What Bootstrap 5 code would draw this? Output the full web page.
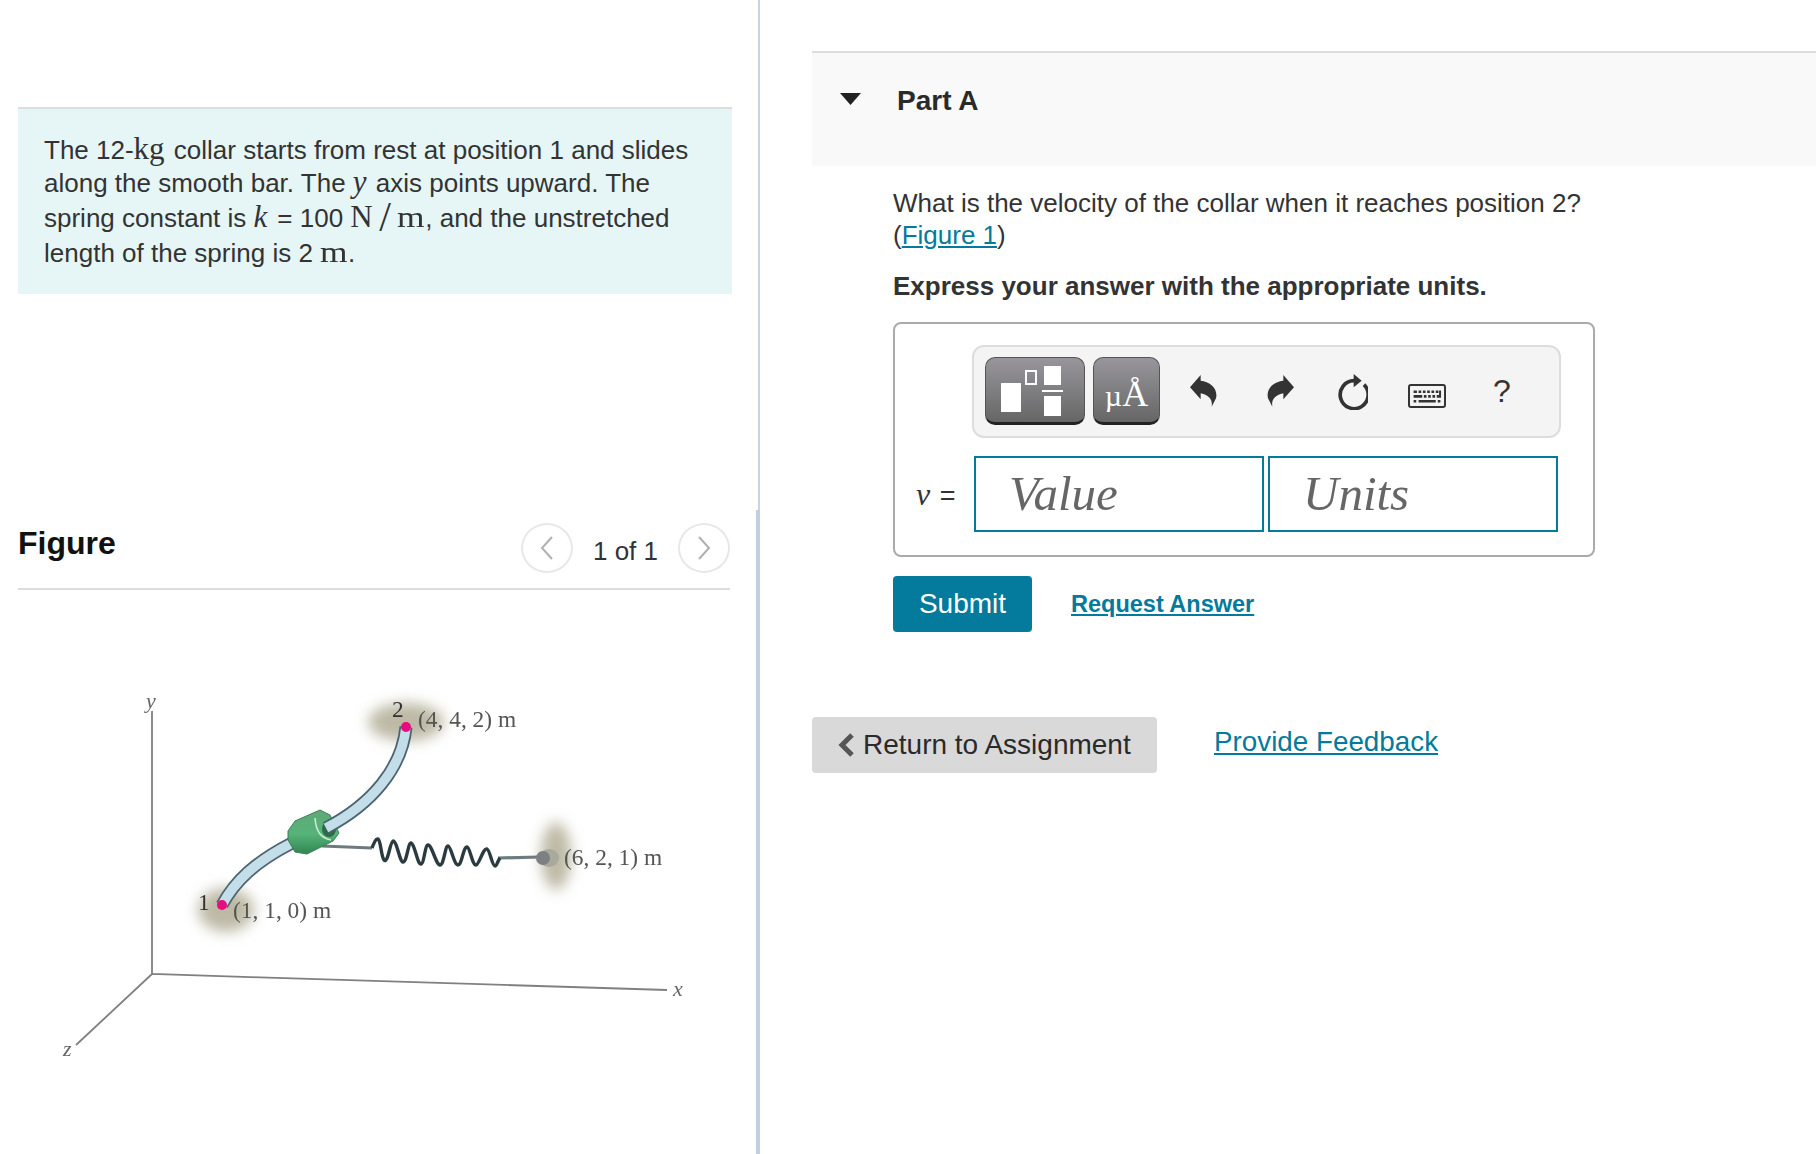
<!DOCTYPE html>
<html lang="en">
<head>
<meta charset="utf-8">
<title>Part A</title>
<link rel="stylesheet" href="https://cdn.jsdelivr.net/npm/bootstrap@5.3.0/dist/css/bootstrap.min.css">
<style>
body{font-family:"Liberation Sans",Arial,sans-serif;font-size:26px;color:#333;background:#fff}
a{color:#047a9c}
.shell{min-height:1154px}
.mth{font-family:"Liberation Serif",serif;font-size:31px;line-height:1}
.mth-kg{padding-right:2px}
.mth-m{display:inline-block;font-size:30px;transform:scaleX(1.18);transform-origin:left center;margin-right:4.500px}
.mth-i{font-family:"Liberation Serif",serif;font-style:italic;font-size:31px;line-height:1;padding-right:2px}
.eq-gap{padding-left:8px}
.big-slash{font-family:"Liberation Serif",serif;font-weight:300;font-size:42px;line-height:26px;vertical-align:-4px;margin:0 6.500px}
.left-pane{width:756px;padding:107px 0 0 18px}
.statement{width:714px;height:187px;background:#e6f6f6;border-top:2px solid #ddd;padding:24px 26px 0;line-height:32px}
.line-tall{display:inline-block;height:38px;width:0;vertical-align:-10px}
.figure-head{width:712px;height:89px;margin-top:207px;border-bottom:2px solid #ddd;padding-bottom:15px}
.figure-title{font-size:32px;font-weight:700;color:#111;line-height:38px;margin:0;padding-bottom:11px}
.nav-circle{width:52px;height:50px;border:2px solid #e8e8e8;border-radius:50%;background:#fff;padding:0}
.page-count{width:105px;text-align:center;font-size:26px;padding-top:6px}
.figure-art{display:block;width:756px;height:562px}
.divider-col{width:4px}
.div-thin{height:510px;width:2px;background:#c7d4e3}
.div-thick{width:4px;background:#c0cfe0}
.right-pane{padding-top:51px;padding-left:52px}
.part-head{height:115px;background:#f9f9f9;border-top:2px solid #ddd;padding:0 0 0 28px}
.part-title{font-size:28px;font-weight:700;color:#2a2a2a;margin:29px 0 0 36px;line-height:38px}
.tri{margin-top:40px;display:block}
.part-body{width:702px;margin-left:81px;padding-top:21px;line-height:32px}
.instr{font-weight:700;margin-top:18.500px}
.answer-box{height:235px;border:2px solid #aaa;border-radius:8px;margin-top:20.500px;padding:21px 0 0 77px}
.tool-bar{width:589px;height:93px;background:#f4f4f4;border:2px solid #ddd;border-radius:12px;padding:10px 0 0 11px}
.tool-btn{height:68px;padding:0;border:1px solid #555;border-bottom:3px solid #222;border-radius:10px;background:linear-gradient(#98969c,#666);color:#fff}
.tool-a{width:100px}
.tool-b{width:67px;margin-left:8px;font-family:"Liberation Serif",serif;font-size:36px;line-height:1;padding-top:7px}
.tool-b:hover,.tool-a:hover{color:#fff;background:#777}
.mu-small{font-size:30px}
.plain-ic{display:block}
.undo-ic{margin:18px 0 0 30px}
.redo-ic{margin:18px 0 0 50px}
.reload-ic{margin:16px 0 0 42px}
.keys-ic{margin:27px 0 0 40px}
.qm{font-size:32px;line-height:32px;margin:18px 0 0 47px;color:#333}
.ans-row{margin:18px 0 0 -77px}
.v-label{width:79px;padding-left:21px;font-size:27px;padding-top:22px;line-height:32px}
.v-label i{font-family:"Liberation Serif",serif;font-size:32px;padding-right:2px}
.ans-input{width:290px;height:76px;border:2px solid #047a9c;border-radius:0;padding:0 0 2px 33px;font-family:"Liberation Serif",serif;font-style:italic;font-size:49px;color:#666;background:#fff}
.ans-input::placeholder{color:#666;opacity:1}
.ans-input+.ans-input{margin-left:4px}
.submit-row{margin-top:19px}
.submit-btn{width:139px;height:56px;padding:0;background:#047a9c;border:0;border-radius:4px;color:#fff;font-size:28px}
.submit-btn:hover{background:#047a9c;color:#fff}
.req-link{font-size:23.500px;font-weight:700;margin:0 0 0 39px}
.foot-row{margin-top:84.500px}
.return-btn{width:345px;height:56px;background:#d9d9d9;border:0;border-radius:4px;padding:0 0 0 26px;font-size:28px;color:#2a2a2a;line-height:1}
.return-btn:hover{background:#d9d9d9;color:#2a2a2a}
.fb-link{font-size:27.800px;margin:0 0 0 57px;padding-bottom:6px}
</style>
</head>
<body>
<div class="shell d-flex">
  <section class="left-pane flex-shrink-0">
    <div class="statement">The 12-<span class="mth mth-kg">kg</span> collar starts from rest at position 1 and slides along the smooth bar. The <span class="mth-i">y</span> axis points upward. The<br>spring constant is <span class="mth-i">k</span><span class="eq-gap">=</span> 100 <span class="mth">N</span><span class="big-slash">/</span><span class="mth mth-m">m</span>, and the unstretched<span class="line-tall"></span><br>length of the spring is 2 <span class="mth mth-m">m</span>.</div>
    <div class="figure-head d-flex align-items-end justify-content-between">
      <h2 class="figure-title">Figure</h2>
      <div class="d-flex align-items-center">
        <button class="nav-circle d-flex align-items-center justify-content-center" aria-label="Previous"><svg width="14" height="24" viewBox="0 0 14 24"><path d="M12 1 2 12l10 11" fill="none" stroke="#b0b0b0" stroke-width="2"/></svg></button>
        <span class="page-count">1 of 1</span>
        <button class="nav-circle d-flex align-items-center justify-content-center" aria-label="Next"><svg width="14" height="24" viewBox="0 0 14 24"><path d="M2 1l10 11L2 23" fill="none" stroke="#b0b0b0" stroke-width="2"/></svg></button>
      </div>
    </div>
    <svg class="figure-art" viewBox="18 592 756 562" aria-label="Collar on a curved bar with a spring">
      <defs>
        <filter id="soft" x="-60%" y="-60%" width="220%" height="220%"><feGaussianBlur stdDeviation="7"/></filter>
        <filter id="tiny" x="-10%" y="-10%" width="120%" height="120%"><feGaussianBlur stdDeviation="0.6"/></filter>
        <linearGradient id="coll" x1="0" y1="0" x2="0" y2="1"><stop offset="0" stop-color="#5fa877"/><stop offset=".55" stop-color="#57b37a"/><stop offset="1" stop-color="#2f8550"/></linearGradient>
      </defs>
      <ellipse cx="226" cy="912" rx="28" ry="22" fill="#bdb9a5" filter="url(#soft)"/>
      <ellipse cx="406" cy="724" rx="38" ry="19" fill="#bdb9a5" filter="url(#soft)"/>
      <ellipse cx="556" cy="858" rx="15" ry="34" fill="#bdb9a5" filter="url(#soft)"/>
      <path d="M152 713V976L667 992M152 976 76 1047" fill="none" stroke="#808080" stroke-width="1.800" filter="url(#tiny)"/>
      <g filter="url(#tiny)">
        <path d="M222 907C235 883 255 864 292 845" fill="none" stroke="#4c6470" stroke-width="13"/>
        <path d="M222 907C235 883 255 864 292 845" fill="none" stroke="#c3dde9" stroke-width="9.500"/>
        <path d="M322 848 372 850M498 860 540 859" stroke="#6d7a7e" stroke-width="3.200" fill="none"/>
        <path d="M372 850C374 845 376 840 378 841 381 843 381 858 384 862 388 866 390 844 393 843 397 843 400 865 403 864 407 864 408 845 411 845 415 846 417 866 421 866 424 866 425 847 428 847 432 847 436 867 440 867 444 867 445 848 448 848 451 848 454 867 458 867 462 867 463 849 467 849 470 849 472 867 476 867 479 867 483 850 487 851 490 852 492 868 495 868 497 868 498 862 500 860" fill="none" stroke="#2c3a40" stroke-width="3.400" stroke-linejoin="round"/>
        <ellipse cx="549" cy="860" rx="10" ry="9" fill="#a9a99d"/>
        <circle cx="543" cy="860" r="7" fill="#7c8082"/>
        <path d="M288 833 295 823 320 812 330 817 339 835 333 843 307 856 295 854 288 842Z" fill="url(#coll)" stroke="#3c7d55" stroke-width="1"/>
        <path d="M315 820C316 835 322 840 331 842" fill="none" stroke="#c8ead2" stroke-width="1.600"/>
        <ellipse cx="329" cy="831" rx="7" ry="8" fill="#2f6b47"/>
        <path d="M326 830C372 806 402 770 406 729" fill="none" stroke="#4c6470" stroke-width="13"/>
        <path d="M326 830C372 806 402 770 406 729" fill="none" stroke="#c3dde9" stroke-width="9.500"/>
        <circle cx="222" cy="907" r="5" fill="#e5087f"/>
        <circle cx="406" cy="729" r="5" fill="#e5087f"/>
      </g>
      <g font-family="Liberation Serif,serif" fill="#555" filter="url(#tiny)" font-size="23.400">
        <text x="418" y="729">(4, 4, 2) m</text>
        <text x="233" y="920">(1, 1, 0) m</text>
        <text x="564" y="867">(6, 2, 1) m</text>
        <text x="392" y="719" fill="#333">2</text>
        <text x="198" y="912" fill="#333">1</text>
        <text x="146" y="710" font-style="italic" font-size="22" fill="#666">y</text>
        <text x="673" y="998" font-style="italic" font-size="22" fill="#666">x</text>
        <text x="63" y="1058" font-style="italic" font-size="22" fill="#666">z</text>
      </g>
    </svg>
  </section>
  <div class="divider-col d-flex flex-column align-items-end flex-shrink-0">
    <div class="div-thin"></div>
    <div class="div-thick flex-grow-1"></div>
  </div>
  <section class="right-pane flex-grow-1">
    <div class="part-head d-flex align-items-start">
      <svg class="tri" width="21" height="12" viewBox="0 0 21 12"><path d="M0 0H21L10.500 12Z" fill="#222"/></svg>
      <h3 class="part-title">Part A</h3>
    </div>
    <div class="part-body">
      <div>What is the velocity of the collar when it reaches position 2?<br>(<a href="#">Figure 1</a>)</div>
      <div class="instr">Express your answer with the appropriate units.</div>
      <div class="answer-box">
        <div class="tool-bar d-flex align-items-start">
          <button class="btn tool-btn tool-a" aria-label="Templates"><svg width="100" height="66" viewBox="0 0 100 66" class="d-block"><rect x="15" y="25" width="20" height="29" fill="#fff"/><rect x="40" y="13" width="10" height="13" fill="none" stroke="#fff" stroke-width="2"/><rect x="58" y="8" width="17" height="19" fill="#fff"/><rect x="56" y="32" width="21" height="2" fill="#fff"/><rect x="58" y="38" width="17" height="20" fill="#fff"/></svg></button>
          <button class="btn tool-btn tool-b"><span class="mu-small">µ</span>Å</button>
          <svg class="plain-ic undo-ic" width="27" height="32" viewBox="0 0 81 96"><path d="M0 37 32 0V17C60 20 85 40 78 70L65 95C68 75 60 62 32 55V73Z" fill="#333"/></svg>
          <svg class="plain-ic redo-ic" width="27" height="32" viewBox="0 0 81 96"><path transform="matrix(-1 0 0 1 81 0)" d="M0 37 32 0V17C60 20 85 40 78 70L65 95C68 75 60 62 32 55V73Z" fill="#333"/></svg>
          <svg class="plain-ic reload-ic" width="32" height="37" viewBox="0 0 96 111"><path d="M54 23A42 42 0 1 0 84 35" fill="none" stroke="#333" stroke-width="11"/><path d="M53 3 77 23 53 43Z" fill="#333"/></svg>
          <svg class="plain-ic keys-ic" width="38" height="24" viewBox="0 0 115 72"><rect x="3" y="3" width="109" height="66" rx="6" fill="none" stroke="#333" stroke-width="6"/><path d="M17 19h10v8H17zM32 19h8v8h-8zM45 19h8v8h-8zM58 19h8v8h-8zM71 19h8v8h-8zM84 19h8v8h-8zM17 33h26v8H17zM48 33h8v8h-8zM61 33h8v8h-8zM74 33h8v8h-8zM87 33h7V19h6v22H87zM17 48h8v8h-8zM32 48h52v8H32zM90 48h8v8h-8z" fill="#333"/></svg>
          <span class="qm">?</span>
        </div>
        <div class="ans-row d-flex align-items-start">
          <div class="v-label"><i>v</i> =</div>
          <input class="form-control ans-input" placeholder="Value" aria-label="Value">
          <input class="form-control ans-input" placeholder="Units" aria-label="Units">
        </div>
      </div>
      <div class="submit-row d-flex align-items-center">
        <button class="btn submit-btn">Submit</button>
        <a class="req-link" href="#">Request Answer</a>
      </div>
    </div>
    <div class="foot-row d-flex align-items-center">
      <button class="btn return-btn d-flex align-items-center"><svg width="17" height="24" viewBox="0 0 17 24" class="me-2"><path d="M14 2 4 12l10 10" fill="none" stroke="#555" stroke-width="5"/></svg>Return to Assignment</button>
      <a class="fb-link" href="#">Provide Feedback</a>
    </div>
  </section>
</div>
</body>
</html>
